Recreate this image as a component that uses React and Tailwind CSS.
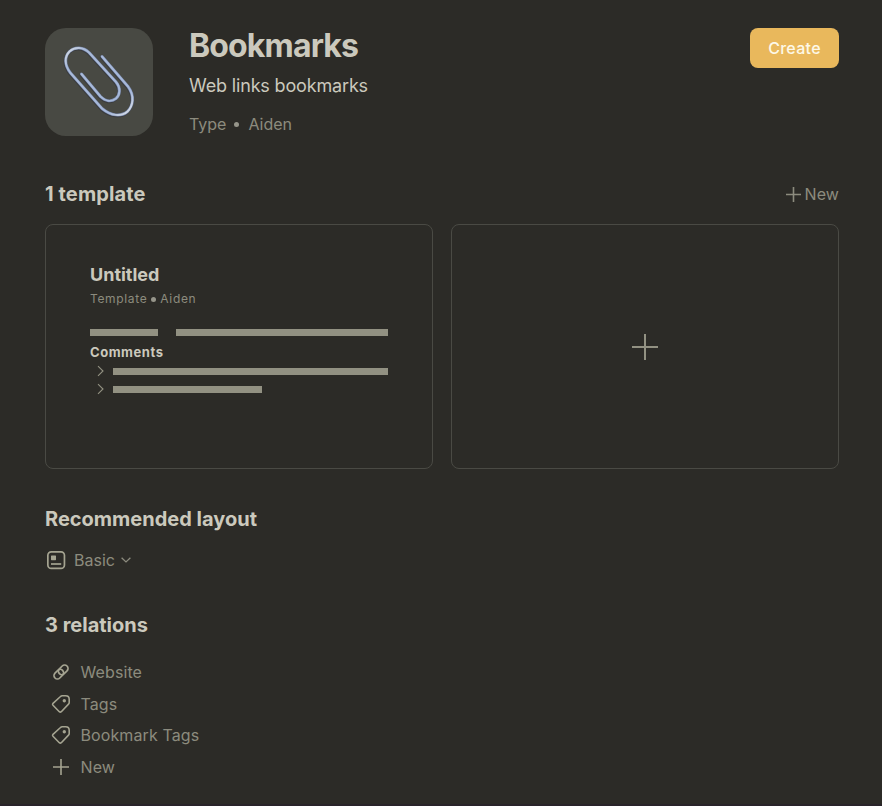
import React from "react";

function Plus({ size, stroke = 1.6, className = "" }) {
  const c = size / 2;
  return (
    <svg width={size} height={size} viewBox={`0 0 ${size} ${size}`} className={`shrink-0 ${className}`} stroke="currentColor" strokeWidth={stroke} fill="none">
      <path d={`M${c} 0V${size}M0 ${c}H${size}`} />
    </svg>
  );
}

function Paperclip() {
  const d =
    "M57 28.500L83 58.500C90 68 88 78 82.500 83.500C76 89 66 88 57 80.500L25.500 45C19 36.500 19.500 28.500 24.500 23.500C30 18.500 38 19 44 24.500L71 54C76 60 75 67 71 70.500C66.500 74 60.500 73.500 55.500 68.500L36.500 46";
  return (
    <svg width="108" height="108" viewBox="0 0 108 108" fill="none" strokeLinecap="round" strokeLinejoin="round">
      <defs>
        <linearGradient id="wire" x1="20" y1="20" x2="88" y2="88" gradientUnits="userSpaceOnUse">
          <stop offset="0" stopColor="#dfe2e6" />
          <stop offset="0.15" stopColor="#a9bad9" />
          <stop offset="0.8" stopColor="#a6b8da" />
          <stop offset="1" stopColor="#e6e8ea" />
        </linearGradient>
      </defs>
      <path d={d} stroke="#34363c" strokeWidth="3" transform="translate(-0.6 1)" opacity="0.7" />
      <path d={d} stroke="#7686a8" strokeWidth="3" />
      <path d={d} stroke="url(#wire)" strokeWidth="2" />
    </svg>
  );
}

function TagIcon() {
  return (
    <svg width="20" height="20" viewBox="0 0 20 20" fill="none" stroke="currentColor" strokeWidth="1.6" strokeLinejoin="round">
      <path d="M11.200 1.800H14.700Q18.200 1.800 18.200 5.300V8.400Q18.200 9.400 17.500 10.100L10.300 17.700Q9.300 18.600 8.300 17.700L2 11.300Q1.100 10.300 2 9.300L9.500 2.500Q10.200 1.800 11.200 1.800Z" />
      <circle cx="13.300" cy="6.700" r="1.700" fill="currentColor" stroke="none" />
    </svg>
  );
}

function LinkIcon() {
  return (
    <svg width="20" height="20" viewBox="0 0 20 20" fill="none" stroke="currentColor" strokeWidth="1.700">
      <rect x="-5.400" y="-3.400" width="10.800" height="6.800" rx="3.400" transform="translate(12.200 7.800) rotate(-45)" />
      <rect x="-5.400" y="-3.400" width="10.800" height="6.800" rx="3.400" transform="translate(7.800 12.200) rotate(-45)" />
    </svg>
  );
}

function LayoutIcon() {
  return (
    <svg width="20" height="20" viewBox="0 0 20 20" fill="none" stroke="currentColor" strokeWidth="1.700">
      <rect x="1.850" y="1.850" width="16.600" height="16.600" rx="3.400" />
      <rect x="5" y="5.500" width="5" height="4.700" rx="0.600" fill="currentColor" stroke="none" />
      <path d="M5 14H15.200" strokeWidth="1.700" />
    </svg>
  );
}

function Chevron() {
  return (
    <svg width="7" height="12" viewBox="0 0 7 12" fill="none" stroke="currentColor" strokeWidth="1.100" className="shrink-0">
      <path d="M1 1.200L6 6L1 10.800" />
    </svg>
  );
}

const relations = [
  { name: "Website", icon: <LinkIcon /> },
  { name: "Tags", icon: <TagIcon /> },
  { name: "Bookmark Tags", icon: <TagIcon /> },
  { name: "New", icon: <Plus size={16} stroke={1.6} /> },
];

export default function App() {
  return (
    <main className="h-[806px] w-[882px] overflow-hidden border-b-2 border-[#29242a] bg-[#2c2b27] pl-[45px] pr-[43px] pt-7 font-['Inter',sans-serif] text-[#cbc9bd]">
      <header className="flex h-[108px]">
        <div className="h-[108px] w-[108px] shrink-0 rounded-[21px] bg-[#484943]">
          <Paperclip />
        </div>
        <div className="ml-9 flex-1">
          <h1 className="h-9 text-[32px] font-bold leading-9 tracking-[-0.85px]">Bookmarks</h1>
          <p className="mt-2.5 h-6 text-lg leading-6 tracking-[-0.16px]">Web links bookmarks</p>
          <div className="mt-3.5 flex h-6 items-center text-base leading-6 text-[#8c8b7e]">
            <span>Type</span>
            <span className="ml-2 mr-[9px] h-[5px] w-[5px] rounded-full bg-[#96958a]" />
            <span>Aiden</span>
          </div>
        </div>
        <button className="h-10 w-[89px] rounded-lg bg-[#e9b85c] text-base font-medium tracking-[0.3px] text-[#fdf8e8]">Create</button>
      </header>

      <section className="mt-11">
        <div className="flex h-7 items-center justify-between">
          <h2 className="text-xl font-bold leading-7 tracking-[0.12px]">1 template</h2>
          <button className="flex items-center gap-1 text-base leading-7 tracking-[0.1px] text-[#8c8b7e]">
            <Plus size={15} />
            <span>New</span>
          </button>
        </div>
        <div className="mt-4 grid h-[245px] grid-cols-2 gap-[18px]">
          <article className="rounded-lg border border-[#4a4a44] px-11 pt-[38px]">
            <h3 className="h-6 text-lg font-bold leading-6">Untitled</h3>
            <div className="mt-0.5 flex h-5 items-center text-[12px] leading-5 tracking-[0.650px] text-[#8c8b7e]">
              <span>Template</span>
              <span className="mx-1 h-[5px] w-[5px] rounded-full bg-[#96958a]" />
              <span>Aiden</span>
            </div>
            <div className="mt-5 flex h-[7px] gap-[18px]">
              <div className="w-[68px] bg-[#929182]" />
              <div className="w-[212px] bg-[#929182]" />
            </div>
            <h4 className="mt-1.5 h-5 text-[13px] font-bold leading-5 tracking-[0.550px]">Comments</h4>
            <div className="flex h-[18px] items-center gap-[9px] pl-[7px] text-[#929182]">
              <Chevron />
              <div className="h-[7px] w-[275px] bg-[#929182]" />
            </div>
            <div className="flex h-[18px] items-center gap-[9px] pl-[7px] text-[#929182]">
              <Chevron />
              <div className="h-[7px] w-[149px] bg-[#929182]" />
            </div>
          </article>
          <button className="flex items-center justify-center rounded-lg border border-[#4a4a44] text-[#929182]">
            <Plus size={26} stroke={2} />
          </button>
        </div>
      </section>

      <section className="mt-9">
        <h2 className="h-7 text-xl font-bold leading-7">Recommended layout</h2>
        <div className="mt-[13px] flex h-7 items-center pl-px text-base leading-7 text-[#8c8b7e]">
          <span className="text-[#a5a491]"><LayoutIcon /></span>
          <span className="ml-2">Basic</span>
          <svg width="10" height="6" viewBox="0 0 10 6" fill="none" stroke="currentColor" strokeWidth="1.300" className="ml-1.5">
            <path d="M0.600 0.700L5 4.900L9.400 0.700" />
          </svg>
        </div>
      </section>

      <section className="mt-[37px]">
        <h2 className="h-7 text-xl font-bold leading-7">3 relations</h2>
        <ul className="mt-[17px]">
          {relations.map((r) => (
            <li key={r.name} className="flex h-[31.700px] items-center gap-[9.500px] pl-1.5 text-base tracking-[0.100px] text-[#8c8b7e]">
              <span className="flex w-5 justify-center text-[#a5a491]">{r.icon}</span>
              <span>{r.name}</span>
            </li>
          ))}
        </ul>
      </section>
    </main>
  );
}
